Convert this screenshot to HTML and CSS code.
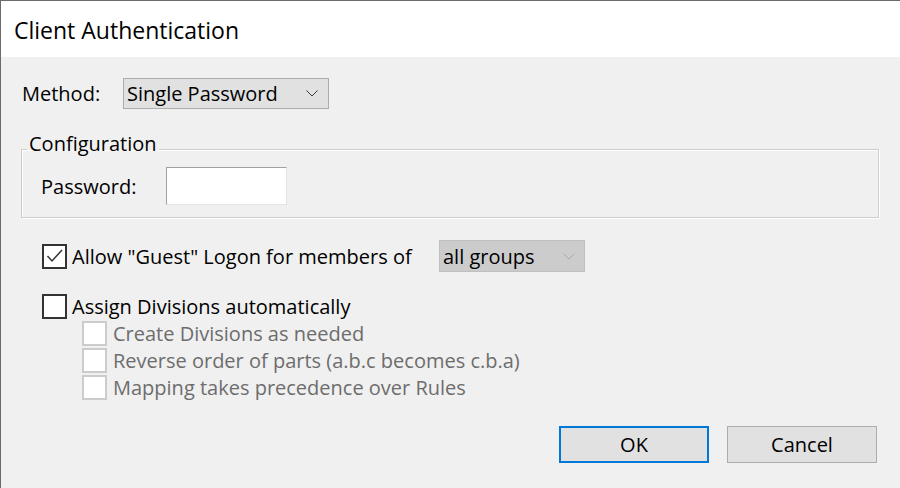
FILE: index.html
```html
<!DOCTYPE html>
<html lang="en">
<head>
    <meta charset="UTF-8">
    <meta name="viewport" content="width=device-width, initial-scale=1.0">
    <title>Client Authentication</title>
    <link rel="stylesheet" href="styles.css">
</head>
<body>
    <div class="window">
        <div class="titlebar">Client Authentication</div>
        <div class="dialog">
            <div class="row method-row">
                <span class="method-label">Method:</span>
                <div class="combo method-combo">
                    <span>Single Password</span>
                    <svg class="chevron" width="12" height="7" viewBox="0 0 12 7"><polyline points="0.5,0.5 6,6 11.5,0.5" /></svg>
                </div>
            </div>

            <fieldset class="group">
                <legend>Configuration</legend>
                <div class="row password-row">
                    <span class="password-label">Password:</span>
                    <div class="textbox"></div>
                </div>
            </fieldset>

            <div class="row guest-row">
                <span class="check">
                    <svg width="21" height="21" viewBox="0 0 21 21"><polyline points="3.5,10 8,15 18,4" /></svg>
                </span>
                <span class="guest-text">Allow "Guest" Logon for members of</span>
                <div class="combo groups-combo">
                    <span>all groups</span>
                    <svg class="chevron" width="12" height="7" viewBox="0 0 12 7"><polyline points="0.5,0.5 6,6 11.5,0.5" /></svg>
                </div>
            </div>

            <div class="row check-row">
                <span class="check"></span>
                <span>Assign Divisions automatically</span>
            </div>
            <div class="sub-options">
                <div class="row sub-row">
                    <span class="check disabled"></span>
                    <span>Create Divisions as needed</span>
                </div>
                <div class="row sub-row">
                    <span class="check disabled"></span>
                    <span>Reverse order of parts (a.b.c becomes c.b.a)</span>
                </div>
                <div class="row sub-row">
                    <span class="check disabled"></span>
                    <span>Mapping takes precedence over Rules</span>
                </div>
            </div>

            <div class="buttons">
                <button class="btn default">OK</button>
                <button class="btn">Cancel</button>
            </div>
        </div>
    </div>
</body>
</html>
```

FILE: styles.css
```css
body {
    margin: 0;
    background-color: #f0f0f0;
    font-family: "Open Sans", "Noto Sans", sans-serif;
    font-size: 20px;
    color: #000;
    overflow: hidden;
}
.window {
    height: 488px;
    box-sizing: border-box;
    border-top: 1px solid #6b6b6b;
    border-left: 1px solid #6b6b6b;
}
.titlebar {
    height: 54px;
    padding-top: 2px;
    line-height: 54px;
    padding-left: 13px;
    background-color: #fff;
    font-size: 23px;
}
.dialog {
    padding-left: 20px;
}
.row {
    display: flex;
    align-items: center;
}

/* Method */
.method-row {
    margin-top: 21px;
    height: 31px;
}
.method-label {
    width: 101px;
    padding-left: 1px;
}
.combo {
    display: flex;
    align-items: center;
    justify-content: space-between;
    box-sizing: border-box;
    border: 1px solid #adadad;
    background-color: #e1e1e1;
    padding: 0 10px 0 3px;
}
.method-combo {
    width: 206px;
    height: 31px;
}
.chevron polyline {
    fill: none;
    stroke: #3c3c3c;
    stroke-width: 1;
}

/* Configuration group */
.group {
    margin: 23px 21px 0 0;
    padding: 1px 0 12px 5px;
    border: 1px solid #cdcdcd;
    box-shadow: 1px 1px 0 #fff, inset 1px 1px 0 #fff;
}
.group legend {
    padding: 0 2px 10px;
    line-height: 24px;
}
.password-row {
    padding-left: 14px;
}
.password-label {
    width: 125px;
}
.textbox {
    width: 121px;
    height: 38px;
    box-sizing: border-box;
    background-color: #fff;
    border: 1px solid;
    border-color: #a0a0a0 #e3e3e3 #e3e3e3 #a0a0a0;
}

/* Checkboxes */
.guest-row {
    margin-top: 22px;
    height: 32px;
    padding-left: 21px;
}
.check {
    width: 25px;
    height: 25px;
    box-sizing: border-box;
    border: 2px solid #333;
    background-color: #fff;
    margin-right: 5px;
    flex-shrink: 0;
}
.check svg {
    display: block;
}
.check polyline {
    fill: none;
    stroke: #333;
    stroke-width: 1.5;
}
.guest-text {
    width: 367px;
}
.groups-combo {
    width: 146px;
    height: 32px;
    background-color: #ccc;
    border-color: #bfbfbf;
    padding-right: 9px;
}
.groups-combo .chevron polyline {
    stroke: #a9a9a9;
}
.check-row {
    margin-top: 21px;
    height: 27px;
    padding-left: 21px;
}
.sub-options {
    padding-left: 61px;
    color: #6d6d6d;
}
.sub-row {
    height: 27px;
}
.check.disabled {
    border-color: #ccc;
    margin-right: 6px;
}

/* Buttons */
.buttons {
    display: flex;
    justify-content: flex-end;
    gap: 18px;
    margin-top: 25px;
    padding-right: 23px;
}
.btn {
    width: 150px;
    height: 37px;
    box-sizing: border-box;
    background-color: #e1e1e1;
    border: 1px solid #adadad;
    font-family: inherit;
    font-size: 20px;
    color: #000;
    padding: 0;
}
.btn.default {
    border: 2px solid #0078d7;
}
```
